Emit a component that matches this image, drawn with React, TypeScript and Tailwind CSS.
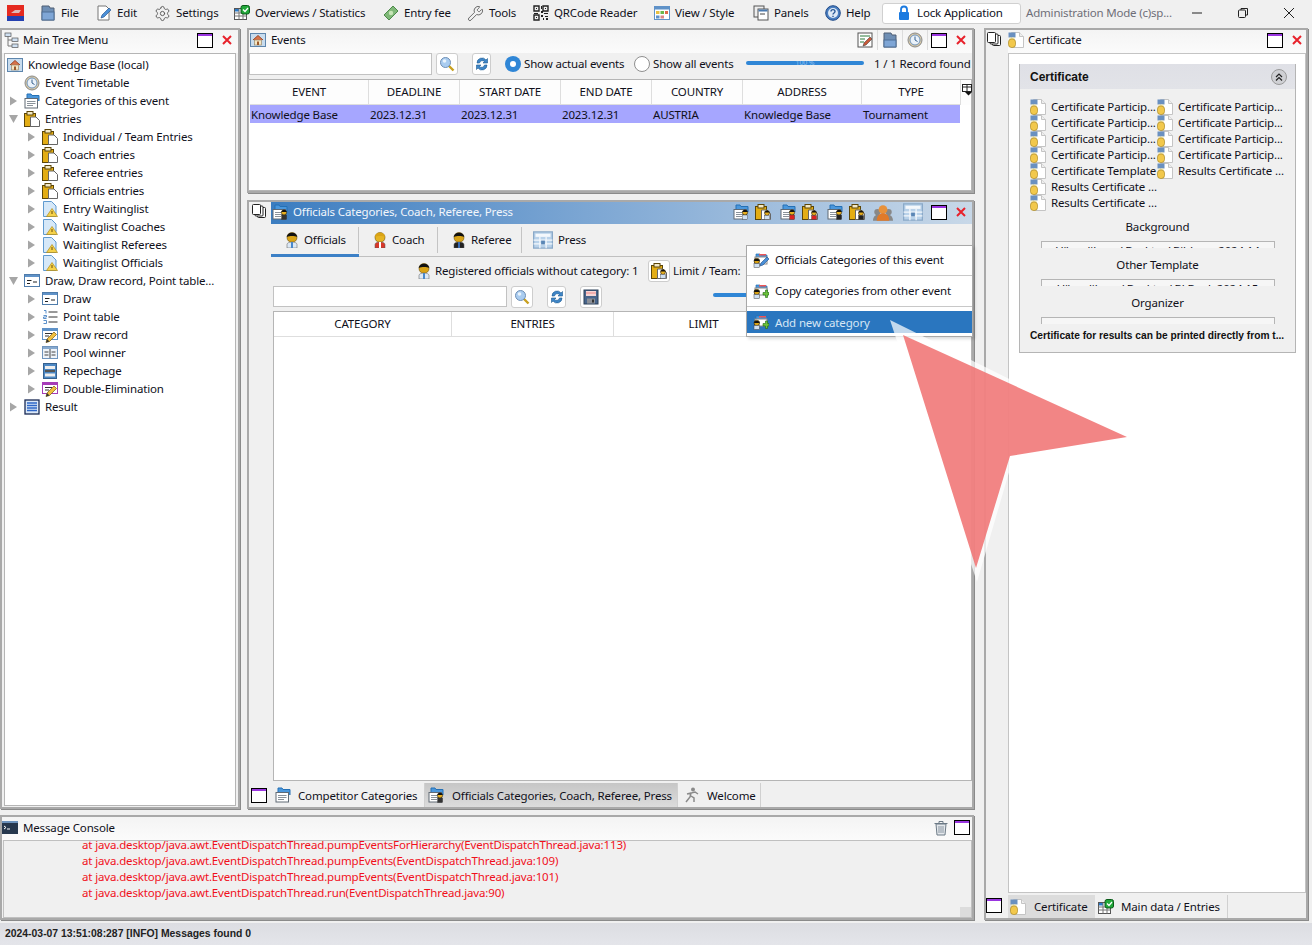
import React from "react";
import { Settings, Wrench } from "lucide-react";

type IP = { s?: number };
const Svg = ({ s = 16, children }: { s?: number; children: React.ReactNode }) => (
  <svg width={s} height={s} viewBox="0 0 16 16" className="shrink-0">{children}</svg>
);

const Max = () => (
  <span className="shrink-0 w-4 h-[15px] border border-black bg-white flex flex-col">
    <span className="h-[2px] bg-[#9a35e0]" />
  </span>
);
const CloseX = () => (
  <svg width="12" height="12" viewBox="0 0 12 12" className="shrink-0"><path d="M2 2l8 8M10 2l-8 8" stroke="#e8212b" strokeWidth="2" /></svg>
);
const Home = ({ s }: IP) => (
  <Svg s={s}><rect x=".5" y="1.5" width="15" height="13" fill="#c8dcee" stroke="#5e86ad" /><path d="M3 8l5-4.5L13 8" fill="#d9734a" stroke="#9c4a2a" /><rect x="4.5" y="8" width="7" height="5" fill="#f5e6c4" stroke="#8a7a5a" strokeWidth=".6" /><rect x="7" y="9.5" width="2" height="3.5" fill="#9c5a2a" /></Svg>
);
const Clock = ({ s }: IP) => (
  <Svg s={s}><circle cx="8" cy="8" r="7" fill="#d9c9a5" stroke="#8a8a8a" /><circle cx="8" cy="8" r="5" fill="#eaf2fa" stroke="#6f94bd" /><path d="M8 4.5V8l2.5 1.5" stroke="#35608f" fill="none" /></Svg>
);
const FolderDoc = ({ s, badge }: IP & { badge?: string }) => (
  <Svg s={s}>
    <path d="M3 6V1h4l1 1.500h7V8" fill="#4a97dc" stroke="#2470b5" />
    <rect x="1" y="5.500" width="12.500" height="9.500" fill="#fff" stroke="#606a75" />
    <path d="M3 8.500h8.500M3 10.500h8.500M3 12.500h6" stroke="#8a929a" />
    {badge && <><circle cx="12" cy="8.500" r="2.600" fill="#e8b020" stroke="#000" strokeWidth=".5" /><path d="M9.400 8c.3-2.600 5-2.600 5.200 0z" fill="#111" /><rect x="9.600" y="11" width="5" height="4.500" fill={badge} stroke="#333" strokeWidth=".4" /></>}
  </Svg>
);
const Clip = ({ s, badge }: IP & { badge?: string }) => (
  <Svg s={s}>
    <rect x=".5" y="2.500" width="11" height="13" fill="#e3ad14" stroke="#5c4608" />
    <rect x="3" y=".5" width="6" height="3.500" fill="#f4e9c4" stroke="#5c4608" />
    <path d="M6.500 6h5.500l3.500 3.500v6h-9z" fill="#fff" stroke="#666" />
    {badge && <><circle cx="12" cy="9" r="2.500" fill="#e8b020" stroke="#000" strokeWidth=".5" /><path d="M9.500 8.500c.3-2.500 4.800-2.500 5 0z" fill="#111" /><rect x="9.600" y="11.500" width="5" height="4" fill={badge} stroke="#333" strokeWidth=".4" /></>}
  </Svg>
);
const Warn = ({ s }: IP) => (
  <Svg s={s}><path d="M1.500 .5h8l4.500 4.500v10.500H1.500z" fill="#d6e8f8" stroke="#5f9ad0" /><path d="M10 7.500l5.500 8h-11z" fill="#f5d24a" stroke="#b08a18" strokeWidth=".7" /><path d="M10 10v3" stroke="#6b4a08" /></Svg>
);
const DrawI = ({ s }: IP) => (
  <Svg s={s}><rect x=".5" y="1.500" width="15" height="12" fill="#fff" stroke="#4f7cab" /><rect x="1" y="2" width="14" height="2" fill="#5f92c8" /><path d="M3 7.500h4.500M3 10.500h3M9 9h4" stroke="#222" /></Svg>
);
const NumList = ({ s }: IP) => (
  <Svg s={s}><path d="M6.500 3h9M6.500 8h9M6.500 13h9" stroke="#333" /><path d="M2 1.500h2v3M1.500 6.500h3v1.500h-3v1.500h3M1.500 11.500h3v3h-3" stroke="#4a84c4" fill="none" strokeWidth=".9" /></Svg>
);
const Pencil = () => <><path d="M4 15.500l1-3.500 7-7 2.500 2.500-7 7z" fill="#f0c040" stroke="#7a5a10" strokeWidth=".7" /><path d="M4 15.500l1-3.500 2.500 2.500z" fill="#333" /></>;
const DrawRec = ({ s, c = "#5f92c8" }: IP & { c?: string }) => (
  <Svg s={s}><rect x=".5" y="1.500" width="15" height="11" fill="#fff" stroke={c} /><rect x="1" y="2" width="14" height="2" fill={c} /><path d="M3 6.500h7M3 9h4" stroke="#333" /><Pencil /></Svg>
);
const Pool = ({ s }: IP) => (
  <Svg s={s}><rect x=".5" y="1.500" width="15" height="12" fill="#eef3f9" stroke="#6f94bd" /><rect x="1" y="2" width="14" height="2" fill="#86a9cf" /><path d="M8 4v9M2.500 7h4M2.500 10h4M9.500 7h4M9.500 10h4" stroke="#444" /></Svg>
);
const Rep = ({ s }: IP) => (
  <Svg s={s}><rect x="1.500" y=".5" width="13" height="15" fill="#4d88c4" stroke="#35608f" /><rect x="3" y="3" width="10" height="3" fill="#eee" /><rect x="3" y="7" width="10" height="2" fill="#555" /><rect x="3" y="10.500" width="10" height="3" fill="#eee" /></Svg>
);
const ResultI = ({ s }: IP) => (
  <Svg s={s}><rect x="1" y="1" width="14" height="14" fill="#dbe8f7" stroke="#1a2a55" strokeWidth="1.300" /><path d="M3 4h10M3 6.500h10M3 9h10M3 11.500h10" stroke="#2d66c8" strokeWidth="1.300" /></Svg>
);
const Medal = ({ s }: IP) => (
  <Svg s={s}>
    <path d="M3.500 .5h8l4 4v11h-12z" fill="#fff" stroke="#c4c4c4" />
    <path d="M11.500 .5v4h4" fill="#eee" stroke="#c4c4c4" />
    <rect x=".5" y=".5" width="7" height="5" fill="#6a90c0" />
    <rect x="1.500" y="5.500" width="5" height="1.500" fill="#f3e6a8" />
    <rect x=".5" y="7" width="7" height="8.500" rx="3" fill="#f2c84c" stroke="#a07c14" strokeWidth=".6" />
  </Svg>
);
const Person = ({ s, shirt = "#dce8f5", tie = "#4a88cc", hair = "#111", face = "#d9a316" }: IP & { shirt?: string; tie?: string; hair?: string; face?: string }) => (
  <Svg s={s}>
    <circle cx="8" cy="5.500" r="5" fill={face} stroke="#5a4000" strokeWidth=".5" />
    <path d="M2.800 5C3 -.8 13-.8 13.200 5c-2.500-1.300-7.500-1.300-10.400 0z" fill={hair} />
    <path d="M3 16v-3.500C3 11 5 10 8 10s5 1 5 2.500V16z" fill={shirt} stroke="#555" strokeWidth=".5" />
    <rect x="7" y="10" width="2" height="6" fill={tie} />
  </Svg>
);
const Press = ({ s }: IP) => (
  <Svg s={s}><rect x=".5" y="1.500" width="15" height="13" fill="#b9d2ea" stroke="#8aa9c8" /><rect x="2" y="3" width="12" height="2.500" fill="#f4f8fc" /><path d="M.5 8h15M.5 11h15M5.500 5.500v9M10.500 5.500v9" stroke="#f4f8fc" /><rect x="6.500" y="8.500" width="3" height="3" fill="#5a86b5" /></Svg>
);
const Group = ({ s }: IP) => (
  <Svg s={s}><circle cx="3.500" cy="8" r="2.500" fill="#888" /><circle cx="12.500" cy="8" r="2.500" fill="#888" /><path d="M0 15c0-4 3-5 4-5s4 1 4 5zM8 15c0-4 3-5 4-5s4 1 4 5z" fill="#888" /><circle cx="8" cy="6" r="3.500" fill="#e8913a" /><path d="M3 15c0-5 3-6 5-6s5 1 5 6z" fill="#e07a2a" /></Svg>
);
const Search = ({ s }: IP) => (
  <Svg s={s}><path d="M9.500 9.500l5 5" stroke="#c8a020" strokeWidth="2.400" /><circle cx="6.500" cy="6.500" r="5" fill="#a9ccf0" stroke="#6f8fb5" /><circle cx="5.500" cy="5" r="1.800" fill="#e9f3fc" /></Svg>
);
const Refresh = ({ s }: IP) => (
  <Svg s={s}><path d="M3 7a5 5 0 0 1 9-3l1.500-1.500V7H9l1.500-1.500a3 3 0 0 0-5 1.500z" fill="#3f86c8" stroke="#1c5a90" strokeWidth=".6" /><path d="M13 9a5 5 0 0 1-9 3l-1.500 1.500V9H7l-1.500 1.500a3 3 0 0 0 5-1.500z" fill="#3f86c8" stroke="#1c5a90" strokeWidth=".6" /></Svg>
);
const Save = ({ s }: IP) => (
  <Svg s={s}><rect x="1" y="1" width="14" height="14" fill="#48658c" stroke="#2d4058" /><rect x="3" y="2" width="10" height="5" fill="#f6d5d5" /><rect x="3" y="3.500" width="10" height="1" fill="#e88" /><rect x="4" y="9.500" width="8" height="5" fill="#8c9098" /><rect x="9" y="10.500" width="2" height="3" fill="#333" /></Svg>
);
const Stack = () => (
  <svg width="15" height="15" viewBox="0 0 15 15" className="shrink-0"><rect x="5.500" y="3.500" width="8" height="10" rx="1" fill="#fff" stroke="#222" /><rect x="3" y="2" width="8" height="10" rx="1" fill="#fff" stroke="#222" /><rect x=".5" y=".5" width="8" height="10" rx="1" fill="#fff" stroke="#222" /></svg>
);
const Plus = () => <path d="M10 9.500h2.500V7h2v2.500H16V12h-1.500v2.500h-2V12H10z" fill="#6cc23a" stroke="#1f6a10" strokeWidth=".6" />;
const MenuIcon = ({ kind }: { kind: "edit" | "plus" }) => (
  <Svg s={16}>
    <path d="M3 6V2h4l1 1h6v5" fill="#4a97dc" stroke="#2470b5" strokeWidth=".7" />
    <rect x="2" y="5" width="12" height="7" fill="#fff" stroke="#8a8a8a" />
    <rect x="6" y="2" width="7" height="1.500" fill="#e55" />
    <circle cx="3.800" cy="9" r="2.800" fill="#d9a316" stroke="#000" strokeWidth=".5" />
    <path d="M1 9c0-3 5.600-3 5.600 0z" fill="#111" />
    <rect x="1" y="11.500" width="5.500" height="4" fill="#cfe0f2" stroke="#444" strokeWidth=".5" />
    {kind === "plus" ? <Plus /> : <path d="M7 14l1-3 6-6 2 2-6 6z" fill="#4a90d8" stroke="#1a4a8a" strokeWidth=".6" />}
  </Svg>
);
const Btn = ({ children, w = "w-[22px]" }: { children: React.ReactNode; w?: string }) => (
  <span className={`shrink-0 ${w} h-[22px] rounded-[3px] border border-[#cdcdcd] bg-white flex items-center justify-center`}>{children}</span>
);
const Console_ = () => (
  <svg width="16" height="13" viewBox="0 0 16 13" className="shrink-0"><rect width="16" height="13" fill="#27384e" /><rect width="16" height="2" fill="#6d93bd" /><path d="M2 5l2 1.500L2 8M5 8h3" stroke="#fff" fill="none" /></svg>
);
const Overview = () => (
  <Svg><rect x=".5" y="3.500" width="12" height="11" fill="#fff" stroke="#555" /><rect x="1" y="4" width="4" height="2.500" fill="#2a7ac8" /><path d="M.5 8h12M.5 11h12M5 4v10.500M9 4v10.500" stroke="#777" /><rect x="7" y=".5" width="8.500" height="8.500" rx="2" fill="#22a83a" stroke="#0a5a18" /><path d="M9 4.500l2 2 3-3.500" stroke="#fff" fill="none" strokeWidth="1.200" /></Svg>
);

const Triangle = ({ open }: { open?: boolean }) => (
  <svg width="9" height="10" viewBox="0 0 9 10" className="shrink-0">
    {open ? <path d="M0 1h9L4.500 9z" fill="#a6a6a6" /> : <path d="M1 .5L8 5l-7 4.500z" fill="#a6a6a6" />}
  </svg>
);

type Row = { t: string; lvl: number; icon: React.ReactNode; exp?: "o" | "c" };
const rows: Row[] = [
  { t: "Knowledge Base (local)", lvl: -1, icon: <Home /> },
  { t: "Event Timetable", lvl: 0, icon: <Clock /> },
  { t: "Categories of this event", lvl: 0, exp: "c", icon: <FolderDoc /> },
  { t: "Entries", lvl: 0, exp: "o", icon: <Clip /> },
  { t: "Individual / Team Entries", lvl: 1, exp: "c", icon: <Clip /> },
  { t: "Coach entries", lvl: 1, exp: "c", icon: <Clip /> },
  { t: "Referee entries", lvl: 1, exp: "c", icon: <Clip /> },
  { t: "Officials entries", lvl: 1, exp: "c", icon: <Clip /> },
  { t: "Entry Waitinglist", lvl: 1, exp: "c", icon: <Warn /> },
  { t: "Waitinglist Coaches", lvl: 1, exp: "c", icon: <Warn /> },
  { t: "Waitinglist Referees", lvl: 1, exp: "c", icon: <Warn /> },
  { t: "Waitinglist Officials", lvl: 1, exp: "c", icon: <Warn /> },
  { t: "Draw, Draw record, Point table...", lvl: 0, exp: "o", icon: <DrawI /> },
  { t: "Draw", lvl: 1, exp: "c", icon: <DrawI /> },
  { t: "Point table", lvl: 1, exp: "c", icon: <NumList /> },
  { t: "Draw record", lvl: 1, exp: "c", icon: <DrawRec /> },
  { t: "Pool winner", lvl: 1, exp: "c", icon: <Pool /> },
  { t: "Repechage", lvl: 1, exp: "c", icon: <Rep /> },
  { t: "Double-Elimination", lvl: 1, exp: "c", icon: <DrawRec c="#a63cb8" /> },
  { t: "Result", lvl: 0, exp: "c", icon: <ResultI /> },
];

const menu: { t: string; w: string; icon: React.ReactNode }[] = [
  { t: "File", w: "w-[56px]", icon: <Svg><path d="M2 15V1h7l1 2h4v12z" fill="#6f8fb5" stroke="#4f5f75" /><rect x="2" y="7" width="12" height="8" fill="#7fa6d6" stroke="#4f6f95" /></Svg> },
  { t: "Edit", w: "w-[58px]", icon: <Svg><path d="M2 1h8l3 3v11H2z" fill="#fff" stroke="#777" /><path d="M5 13l1-3 7-7 2 2-7 7z" fill="#4a90d8" stroke="#1a4a8a" strokeWidth=".6" /></Svg> },
  { t: "Settings", w: "w-[80px]", icon: <Settings size={17} strokeWidth={1.3} color="#555" className="shrink-0" /> },
  { t: "Overviews / Statistics", w: "w-[149px]", icon: <Overview /> },
  { t: "Entry fee", w: "w-[84px]", icon: <Svg><path d="M1 10l9-9 5 5-9 9z" fill="#7fb878" stroke="#4d8a4a" /><circle cx="8" cy="8" r="2.200" fill="#c8e6b8" /></Svg> },
  { t: "Tools", w: "w-[66px]", icon: <Wrench size={17} strokeWidth={1.2} color="#555" className="shrink-0" /> },
  { t: "QRCode Reader", w: "w-[121px]", icon: <Svg><path d="M1 1h5v5H1zM10 1h5v5h-5zM1 10h5v5H1z" fill="none" stroke="#222" strokeWidth="1.400" /><path d="M3 3h1v1H3zM12 3h1v1h-1zM3 12h1v1H3zM8 1h1v3H8zM8 6h2v2H8zM11 8h4v1h-4zM8 10h2v2H8zM12 11h3v1h-3zM10 13h1v2h-1zM13 13h2v2h-2zM1 8h4v1H1z" fill="#222" /></Svg> },
  { t: "View / Style", w: "w-[99px]", icon: <Svg><rect x=".5" y="1.500" width="15" height="13" fill="#fff" stroke="#5f92c8" /><rect x="1" y="2" width="14" height="2.500" fill="#5f92c8" /><rect x="2" y="6" width="3.500" height="3" fill="#e8c040" /><rect x="6.500" y="6" width="3.500" height="3" fill="#6cb84a" /><rect x="11" y="6" width="3" height="3" fill="#e06a4a" /><rect x="2" y="10.500" width="3.500" height="3" fill="#5f92c8" /><rect x="6.500" y="10.500" width="3.500" height="3" fill="#d88" /></Svg> },
  { t: "Panels", w: "w-[72px]", icon: <Svg><rect x="1" y="1" width="10" height="11" fill="#eee" stroke="#555" /><rect x="5" y="4" width="10" height="11" fill="#fff" stroke="#555" /><rect x="5.500" y="4.500" width="9" height="2" fill="#4a7ab0" /><path d="M7 9h5" stroke="#444" /></Svg> },
  { t: "Help", w: "w-[57px]", icon: <Svg><circle cx="8" cy="8" r="7.300" fill="#4a7ec0" stroke="#1f4a88" /><circle cx="8" cy="8" r="5" fill="#dfeaf6" /><path d="M6 6.500C6 4 10 4 10 6.500c0 1.500-2 1.500-2 3M8 10.800v1.200" stroke="#2a5a98" strokeWidth="1.400" fill="none" /></Svg> },
];

const evCols = ["EVENT", "DEADLINE", "START DATE", "END DATE", "COUNTRY", "ADDRESS", "TYPE"];
const evRow = ["Knowledge Base", "2023.12.31", "2023.12.31", "2023.12.31", "AUSTRIA", "Knowledge Base", "Tournament"];

const certs = [
  "Certificate Particip...", "Certificate Particip...", "Certificate Particip...", "Certificate Particip...",
  "Certificate Particip...", "Certificate Particip...", "Certificate Particip...", "Certificate Particip...",
  "Certificate Template", "Results Certificate ...", "Results Certificate ...", "", "Results Certificate ...", "",
];

const logLines = [
  "at java.desktop/java.awt.EventDispatchThread.pumpEventsForHierarchy(EventDispatchThread.java:113)",
  "at java.desktop/java.awt.EventDispatchThread.pumpEvents(EventDispatchThread.java:109)",
  "at java.desktop/java.awt.EventDispatchThread.pumpEvents(EventDispatchThread.java:101)",
  "at java.desktop/java.awt.EventDispatchThread.run(EventDispatchThread.java:90)",
];

const panel = "border-2 border-[#a9a9a9] bg-[#f0f0f0] shadow-[1px_1px_0_#8a8a8a] flex";
const titleGrad = "bg-gradient-to-b from-[#f4f4f4] to-[#fbfbfb]";

const Radio = ({ on }: { on?: boolean }) => (
  <span className={`shrink-0 w-4 h-4 rounded-full flex items-center justify-center ${on ? "bg-[#2f86d6]" : "bg-white border border-[#8f8f8f]"}`}>
    {on && <span className="w-[6px] h-[6px] rounded-full bg-white" />}
  </span>
);

const Field = ({ label, text }: { label: string; text: string }) => (
  <div className="flex flex-col items-center">
    <div className="h-[18px] leading-[18px] mt-[8px]">{label}</div>
    <div className="mt-[5px] w-[234px] h-[7px] border border-b-0 border-[#b5b5b5] bg-[#f6f6f6] overflow-hidden text-center leading-[16px] pt-[1px]">{text}</div>
  </div>
);

const BottomTab = ({ icon, t, on, w }: { icon: React.ReactNode; t: string; on?: boolean; w: string }) => (
  <div className={`${w} h-[24px] flex items-center ${on ? "gap-[8px] pl-[3px] bg-gradient-to-b from-[#c6c6c6] to-[#dcdcdc]" : "gap-[7px] pl-[2px]"} border-r border-[#d0d0d0]`}>
    {icon}<span className="whitespace-nowrap pt-[1px]">{t}</span>
  </div>
);

const SubTab = ({ icon, t, w, on }: { icon: React.ReactNode; t: string; w: string; on?: boolean }) => (
  <div className={`${w} h-[33px] pt-[1px] flex items-center border-b-[3px] mb-[-1px] ${on ? "border-[#3c80c6]" : "border-transparent"}`}>
    <div className="w-full h-[26px] flex items-center gap-[4px] pl-[13px] border-r border-[#c4c4c4]">{icon}<span>{t}</span></div>
  </div>
);

export default function App() {
  return (
    <div className="relative w-[1312px] h-[945px] overflow-hidden flex flex-col bg-[#f0f0f0] text-[11.5px] leading-[16px] text-[#10101a] font-['Noto_Sans',sans-serif] tracking-[-0.15px]">
      {/* menu bar */}
      <div className="h-[27px] pb-[1px] flex items-center shrink-0 pl-[7px]">
        <svg width="17" height="16" viewBox="0 0 17 16" className="shrink-0 mr-[16px]"><rect width="17" height="16" fill="#e52a20" /><rect y="11" width="17" height="5" fill="#2440b0" /><path d="M4 8l4-3h6l-2 3z" fill="#ddd" opacity=".8" /></svg>
        {menu.map((m) => (
          <div key={m.t} className={`${m.w} shrink-0 flex items-center gap-[5px] whitespace-nowrap`}>{m.icon}<span>{m.t}</span></div>
        ))}
        <div className="w-[139px] h-[21px] shrink-0 bg-white border border-[#d0d0d0] rounded-[3px] flex items-center pl-[14px] gap-[6px]">
          <svg width="14" height="16" viewBox="0 0 14 16"><path d="M4 7V4.500a3 3 0 0 1 6 0V7" fill="none" stroke="#1b7ae0" strokeWidth="1.800" /><rect x="2" y="7" width="10" height="8" rx="1" fill="#1b7ae0" /></svg>
          <span>Lock Application</span>
        </div>
        <span className="ml-[5px] text-[#6e6e78] whitespace-nowrap tracking-[-0.19px]">Administration Mode (c)sp...</span>
        <div className="ml-auto flex items-center gap-[34px] pr-[17px]">
          <svg width="12" height="12" viewBox="0 0 12 12"><path d="M1 6h10" stroke="#222" /></svg>
          <svg width="12" height="12" viewBox="0 0 12 12"><rect x="1.500" y="3" width="7" height="7.500" rx="1" fill="none" stroke="#222" /><path d="M4 3V1.500h6.500V8H8.500" fill="none" stroke="#222" /></svg>
          <svg width="12" height="12" viewBox="0 0 12 12"><path d="M1 1l10 10M11 1L1 11" stroke="#222" /></svg>
        </div>
      </div>

      {/* main */}
      <div className="h-[896px] shrink-0 flex pt-[1px]">
        <div className="w-[974px] shrink-0 flex flex-col">
          <div className="h-[781px] flex">
            {/* tree */}
            <div className={`${panel} flex-col w-[240px] shrink-0`}>
              <div className={`h-[23px] pb-[3px] shrink-0 flex items-center pl-[2px] pr-[5px] ${titleGrad}`}>
                <svg width="16" height="16" viewBox="0 0 16 16" className="shrink-0"><path d="M4 3v11h4M4 8h4" stroke="#777" fill="none" /><rect x="1" y="1" width="6" height="3.500" fill="#cfe0f2" stroke="#555" strokeWidth=".7" /><rect x="8" y="6" width="6" height="3.500" fill="#cfe0f2" stroke="#555" strokeWidth=".7" /><rect x="8" y="12" width="6" height="3.500" fill="#cfe0f2" stroke="#555" strokeWidth=".7" /></svg>
                <span className="ml-[3px] flex-1">Main Tree Menu</span>
                <span className="mr-[8px]"><Max /></span><CloseX />
              </div>
              <div className="flex-1 mx-[2px] mb-[1px] bg-white border border-[#b5b5b5] pt-[2px]">
                {rows.map((r) => (
                  <div key={r.t} className={`h-[18px] flex items-center whitespace-nowrap ${r.lvl === -1 ? "pl-[2px]" : r.lvl === 0 ? "pl-[4px]" : "pl-[22px]"}`}>
                    <span className={`${r.lvl === -1 ? "w-0" : "w-[15px]"} shrink-0 flex`}>{r.exp && <Triangle open={r.exp === "o"} />}</span>
                    <span className="mr-[5px] flex">{r.icon}</span>
                    <span>{r.t}</span>
                  </div>
                ))}
              </div>
            </div>

            {/* middle */}
            <div className="ml-[7px] w-[727px] shrink-0 flex flex-col">
              <div className={`${panel} flex-col h-[165px] shrink-0`}>
                <div className={`h-[23px] pb-[3px] shrink-0 flex items-center pl-[1px] pr-[5px] ${titleGrad}`}>
                  <Home />
                  <span className="ml-[5px] flex-1">Events</span>
                  <div className="flex items-center gap-[4px] mr-[3px]">
                    <Svg><rect x="1" y="1" width="14" height="14" fill="#fff" stroke="#555" /><path d="M3 4h10M3 7h5M3 10h4" stroke="#2a7a3a" /><path d="M6 14l1-3 6-6 2 2-6 6z" fill="#c85a3a" stroke="#333" strokeWidth=".5" /></Svg>
                    <span className="w-px h-[20px] bg-[#dcdcdc]" />
                    <Svg><path d="M2 15V1h7l1 2h4v12z" fill="#6f8fb5" stroke="#4f5f75" /><rect x="2" y="8" width="12" height="7" fill="#7fa6d6" stroke="#4f6f95" /></Svg>
                    <span className="w-px h-[20px] bg-[#dcdcdc]" />
                    <Clock />
                    <span className="w-px h-[20px] bg-[#dcdcdc]" />
                  </div>
                  <span className="mr-[8px]"><Max /></span><CloseX />
                </div>
                <div className="h-[22px] mb-[4px] shrink-0 flex items-center whitespace-nowrap">
                  <div className="w-[183px] h-[22px] bg-white border border-[#c2c2c2] shrink-0" />
                  <span className="ml-[4px]"><Btn><Search /></Btn></span>
                  <span className="ml-[14px]"><Btn w="w-[19px]"><Refresh /></Btn></span>
                  <span className="ml-[14px]"><Radio on /></span>
                  <span className="ml-[3px] w-[101px]">Show actual events</span>
                  <span className="ml-[9px]"><Radio /></span>
                  <span className="ml-[3px] w-[81px]">Show all events</span>
                  <span className="ml-[12px] w-[118px] h-[4px] mb-[2px] rounded-full bg-[#2f86d6] shrink-0 text-center text-[7px] leading-[4px] text-[#8fc0ee] overflow-hidden">100 %</span>
                  <span className="ml-[10px]">1 / 1 Record found</span>
                </div>
                <div className="flex-1 bg-white border border-[#b5b5b5] ml-[-1px] flex flex-col">
                  <div className="h-[25px] shrink-0 flex pl-[1px] bg-[#fdfdfd]">
                    <div className="w-[711px] grid grid-cols-[119px_91px_101px_91px_91px_119px_99px]">
                      {evCols.map((c) => <div key={c} className="flex items-center justify-center border-r border-b border-[#dedede]">{c}</div>)}
                    </div>
                    <span className="ml-[1px] mt-[4px]"><svg width="11" height="13" viewBox="0 0 11 13"><rect x=".5" y=".5" width="9" height="7" fill="#fff" stroke="#222" /><path d="M.5 3h9M5 .5v7" stroke="#222" /><path d="M3 8h7l-3.500 3.500z" fill="#111" /></svg></span>
                  </div>
                  <div className="w-[710px] h-[18px] ml-[1px] grid grid-cols-[119px_91px_101px_91px_91px_119px_98px] bg-[#a6a6ff]">
                    {evRow.map((c, i) => <div key={i} className="pl-[1px] pt-[1px] leading-[18px] whitespace-nowrap">{c}</div>)}
                  </div>
                </div>
              </div>

              <div className={`${panel} mt-[7px] h-[609px] shrink-0`}>
                <div className="w-[22px] shrink-0 flex flex-col justify-between items-start">
                  <span className="mt-[2px] ml-[3px]"><Stack /></span>
                  <span className="mb-[4px] ml-[2px]"><Max /></span>
                </div>
                <div className="flex-1 flex flex-col min-w-0">
                  <div className="h-[22px] pb-[2px] shrink-0 flex items-center pl-[1px] pr-[5px] bg-gradient-to-r from-[#3b7dc0] to-[#c8d8e8]">
                    <FolderDoc badge="#333" />
                    <span className="ml-[5px] text-[#f2f6fb] flex-1">Officials Categories, Coach, Referee, Press</span>
                    <div className="flex items-center mr-[8px]">
                      <FolderDoc badge="#cfe0f2" />
                      <span className="ml-[6px] flex"><Clip badge="#cfe0f2" /></span>
                      <span className="ml-[9px] flex"><FolderDoc badge="#d22" /></span>
                      <span className="ml-[6px] flex"><Clip badge="#d22" /></span>
                      <span className="ml-[9px] flex"><FolderDoc badge="#222" /></span>
                      <span className="ml-[6px] flex"><Clip badge="#222" /></span>
                      <span className="ml-[8px] flex"><Group s={20} /></span>
                      <span className="ml-[10px] flex"><Press s={20} /></span>
                    </div>
                    <span className="mr-[8px]"><Max /></span><CloseX />
                  </div>
                  <div className="h-[33px] shrink-0 flex items-start border-b border-[#c0c0c0]">
                    <SubTab on w="w-[88px]" t="Officials" icon={<Person />} />
                    <SubTab w="w-[79px]" t="Coach" icon={<Person face="#e6b422" hair="#d9a316" shirt="#d8382a" tie="#fff" />} />
                    <SubTab w="w-[84px]" t="Referee" icon={<Person shirt="#222" tie="#3a6ab0" />} />
                    <div className="h-[33px] pt-[1px] pb-[3px] flex items-center gap-[5px] pl-[11px]"><Press s={20} /><span>Press</span></div>
                  </div>
                  <div className="h-[27px] shrink-0 flex items-center whitespace-nowrap pl-[145px]">
                    <Person />
                    <span className="ml-[3px] w-[213px]">Registered officials without category: 1</span>
                    <Btn><Clip badge="#cfe0f2" /></Btn>
                    <span className="ml-[3px]">Limit / Team:</span>
                  </div>
                  <div className="h-[27px] pt-[2px] shrink-0 flex items-start pl-[2px]">
                    <div className="w-[234px] h-[21px] bg-white border border-[#c2c2c2] shrink-0" />
                    <span className="ml-[4px]"><Btn><Search /></Btn></span>
                    <span className="ml-[14px]"><Btn w="w-[19px]"><Refresh /></Btn></span>
                    <span className="ml-[14px]"><Btn><Save /></Btn></span>
                    <span className="ml-[111px] mt-[7px] w-[40px] h-[4px] rounded-full bg-[#2f86d6] shrink-0" />
                  </div>
                  <div className="flex-1 ml-[2px] bg-white border border-[#b5b5b5] flex flex-col min-h-0">
                    <div className="h-[25px] shrink-0 flex border-b border-[#dedede]">
                      {[["CATEGORY", "w-[178px]"], ["ENTRIES", "w-[162px]"], ["LIMIT", "w-[180px]"]].map(([c, w]) => (
                        <div key={c} className={`${w} flex items-center justify-center border-r border-[#dedede]`}>{c}</div>
                      ))}
                    </div>
                  </div>
                  <div className="h-[26px] shrink-0 flex items-end ml-[2px]">
                    <BottomTab w="w-[152px]" icon={<FolderDoc />} t="Competitor Categories" />
                    <BottomTab on w="w-[253px]" icon={<FolderDoc badge="#333" />} t="Officials Categories, Coach, Referee, Press" />
                    <div className="w-[83px] h-[24px] flex items-center gap-[7px] pl-[6px] border-r border-[#d0d0d0]">
                      <Svg><circle cx="9" cy="2.500" r="2" fill="#8a8a8a" /><path d="M2 15l4-5 1-4 4-1 3 2M7 9l3 2 0 4M7 6L3 7" stroke="#8a8a8a" strokeWidth="1.500" fill="none" /></Svg>
                      <span className="pt-[1px]">Welcome</span>
                    </div>
                  </div>
                </div>
              </div>
            </div>
          </div>

          {/* console */}
          <div className={`${panel} flex-col mt-[6px] h-[105px] shrink-0`}>
            <div className={`h-[23px] pb-[2px] shrink-0 flex items-center pr-[2px] ${titleGrad}`}>
              <Console_ />
              <span className="ml-[5px] flex-1">Message Console</span>
              <svg width="16" height="16" viewBox="0 0 16 16" className="mr-[5px] shrink-0"><path d="M1.500 3.500h13M6 3V1.500h4V3" stroke="#6c7a86" fill="none" /><path d="M3 4l1 11h8l1-11z" fill="#e4e8ec" stroke="#6c7a86" /><path d="M6 6v7M8 6v7M10 6v7" stroke="#8a96a2" /></svg>
              <Max />
            </div>
            <div className="flex-1 ml-[1px] border border-[#c0c0c0] flex overflow-hidden">
              <div className="flex-1 overflow-hidden pl-[78px] text-[#f0101c]">
                <div className="mt-[-4px]">
                  {logLines.map((l) => <div key={l} className="whitespace-nowrap">{l}</div>)}
                </div>
              </div>
              <div className="w-[11px] shrink-0 flex flex-col justify-end"><div className="h-[10px] bg-[#dcdcdc]" /></div>
            </div>
          </div>
        </div>

        {/* right */}
        <div className={`${panel} ml-[10px] w-[324px] h-[892px] shrink-0`}>
          <div className="w-[22px] shrink-0 flex flex-col justify-between items-start">
            <span className="mt-[2px] ml-[1px]"><Stack /></span>
            <span className="mb-[5px]"><Max /></span>
          </div>
          <div className="flex-1 flex flex-col min-w-0">
            <div className={`h-[23px] pb-[3px] shrink-0 flex items-center pr-[3px] ${titleGrad}`}>
              <Medal />
              <span className="ml-[4px] flex-1">Certificate</span>
              <span className="mr-[8px]"><Max /></span><CloseX />
            </div>
            <div className="h-[840px] shrink-0 bg-white border border-[#c4c4c4] px-[10px] pt-[10px]">
              <div className="w-[277px] h-[289px] border border-t-0 border-[#b5b5b5] bg-[#f0f0f0] flex flex-col">
                <div className="h-[25px] shrink-0 flex items-center justify-between pl-[10px] pr-[8px] bg-gradient-to-b from-[#dfe0e6] to-[#e2e3e8] font-['Liberation_Sans',sans-serif] font-bold text-[12px] text-[#111] tracking-normal">
                  <span>Certificate</span>
                  <span className="w-4 h-4 rounded-full bg-[#cfd0d4] border border-[#9a9a9a] flex items-center justify-center"><svg width="10" height="10" viewBox="0 0 10 10"><path d="M2 5l3-3 3 3M2 8.500l3-3 3 3" stroke="#222" fill="none" strokeWidth="1.200" /></svg></span>
                </div>
                <div className="mt-[10px] ml-[10px] grid grid-cols-[127px_127px] auto-rows-[16px]">
                  {certs.map((c, i) => (
                    <div key={i} className="flex items-center gap-[5px] whitespace-nowrap">{c && <><Medal /><span>{c}</span></>}</div>
                  ))}
                </div>
                <div className="text-center mt-[-1px]">
                  <Field label="Background" text="Ui\aralibrary\Desktop\Bilder ... 2024 14" />
                  <Field label="Other Template" text="Ui\aralibrary\Desktop\Bl Dock 2024 15" />
                  <Field label="Organizer" text="" />
                </div>
                <div className="mt-[4px] ml-[10px] whitespace-nowrap font-['Liberation_Sans',sans-serif] font-bold text-[10.2px] tracking-normal text-[#111]">Certificate for results can be printed directly from t...</div>
              </div>
            </div>
            <div className="h-[25px] shrink-0 flex items-start pt-[2px]">
              <div className="w-[87px] h-[23px] flex items-center gap-[8px] bg-[#dcdcdc] pl-[2px]"><Medal /><span className="pt-[1px]">Certificate</span></div>
              <div className="w-[133px] h-[23px] flex items-center gap-[7px] pl-[3px] border-r border-[#d0d0d0]">
                <Overview />
                <span className="pt-[1px]">Main data / Entries</span>
              </div>
            </div>
          </div>
        </div>
      </div>

      {/* status */}
      <div className="h-[22px] pb-[1px] shrink-0 flex items-center pl-[5px] bg-gradient-to-b from-[#dcdde2] to-[#e4e5ea] font-['Liberation_Sans',sans-serif] font-bold text-[10.4px] tracking-normal text-[#222]">
        2024-03-07 13:51:08:287 [INFO] Messages found 0
      </div>

      {/* context menu */}
      <div className="absolute left-[746px] top-[245px] w-[227px] h-[92px] bg-white border border-[#a8a8a8] shadow-[2px_2px_3px_rgba(0,0,0,0.15)] flex flex-col">
        <div className="h-[30px] pb-[1px] shrink-0 flex items-center gap-[6px] pl-[6px] border-b border-[#c8c8c8]"><MenuIcon kind="edit" /><span>Officials Categories of this event</span></div>
        <div className="h-[31px] shrink-0 flex items-center gap-[6px] pl-[6px] border-b border-[#c8c8c8]"><MenuIcon kind="plus" /><span>Copy categories from other event</span></div>
        <div className="h-[22px] shrink-0 mt-[4px] flex items-center gap-[6px] pl-[6px] bg-[#2a76bf] text-[#d6e6f5]"><MenuIcon kind="plus" /><span className="pt-[1px]">Add new category</span></div>
      </div>

      {/* arrow overlay */}
      <svg width="1312" height="945" viewBox="0 0 1312 945" className="absolute left-0 top-0 pointer-events-none">
        <polygon points="890,320 1127,437 1012,462 977,582" fill="#fff" opacity=".72" />
        <polygon points="903,335 1127,437 1010,456 976,568" fill="#f07070" opacity=".85" />
      </svg>
    </div>
  );
}
